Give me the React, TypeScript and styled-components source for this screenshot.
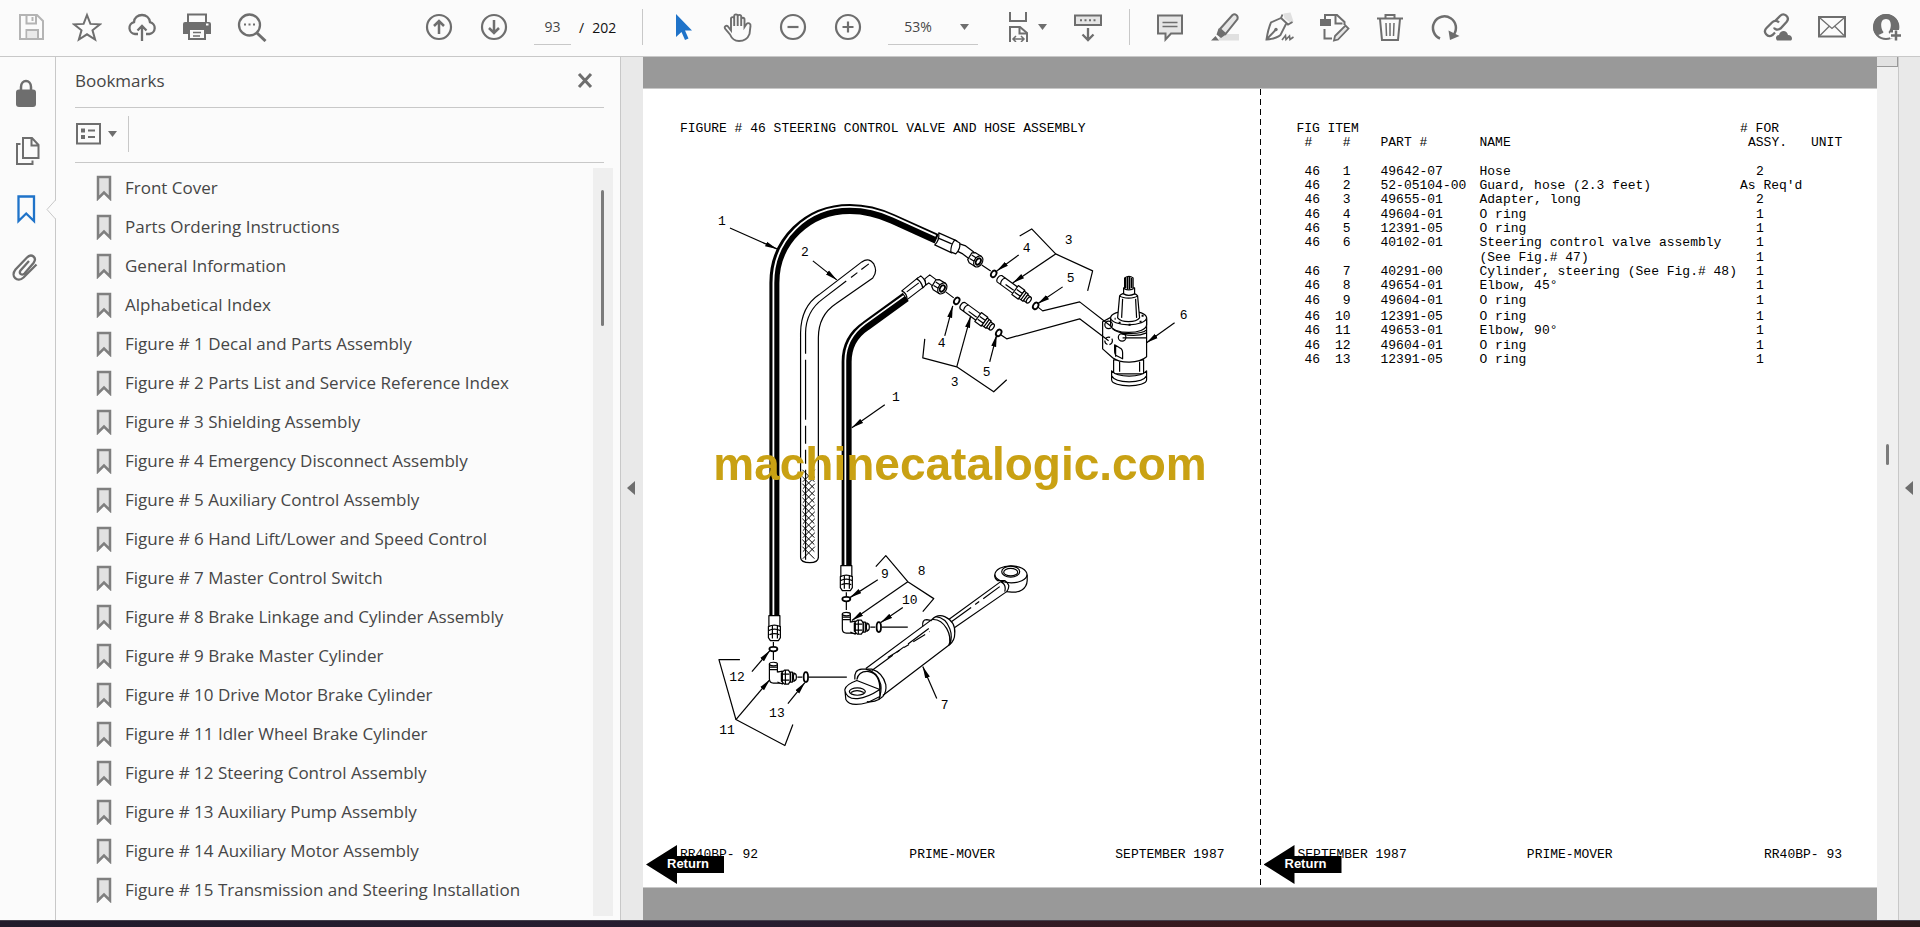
import React from "react";
import styled, { createGlobalStyle } from "styled-components";

const ui = `"Open Sans", "Noto Sans", sans-serif`;
const mono = `"Liberation Mono", "DejaVu Sans Mono", monospace`;
const ink = "#6e6e6e";
const rule = "#c8c8c8";

const GlobalStyle = createGlobalStyle`
  * { box-sizing: border-box; }
  body { margin: 0; background: #fbfbfb; font-family: ${ui}; color: #464646; }
  button, input, select { font: inherit; color: inherit; }
`;

/* ---------- shell ---------- */

const Shell = styled.div`
  display: flex;
  flex-direction: column;
  height: 100vh;
  overflow: hidden;
`;

const Toolbar = styled.header`
  flex: none;
  display: flex;
  align-items: center;
  height: 57px;
  padding: 0 6px 2px 4px;
  background: #fbfbfb;
  border-bottom: 1px solid ${rule};
`;

const ToolGroup = styled.div<{ $start?: number; $end?: boolean }>`
  display: flex;
  align-items: center;
  margin-left: ${(p) => (p.$end ? "auto" : `${p.$start ?? 0}px`)};
`;

const ToolButton = styled.button<{ $wide?: boolean }>`
  display: flex;
  align-items: center;
  justify-content: center;
  gap: 4px;
  width: ${(p) => (p.$wide ? 70 : 55)}px;
  height: 44px;
  padding: 0;
  border: 0;
  background: transparent;
`;

const Divider = styled.span<{ $before: number }>`
  width: 1px;
  height: 36px;
  margin: 0 12px 0 ${(p) => p.$before}px;
  background: ${rule};
`;

const PageInput = styled.input`
  width: 37px;
  height: 35px;
  margin-left: 13px;
  padding: 0;
  border: 0;
  border-bottom: 1px solid ${rule};
  background: transparent;
  font-size: 14px;
  text-align: center;
`;

const PageTotal = styled.span`
  display: flex;
  gap: 8px;
  margin-left: 8px;
  font-size: 14px;
  color: #111;
`;

const ZoomField = styled.label`
  position: relative;
  display: flex;
  margin: 0 12px 0 13px;
  svg {
    position: absolute;
    right: 9px;
    top: 14px;
    pointer-events: none;
  }
`;

const ZoomSelect = styled.select`
  appearance: none;
  width: 90px;
  height: 35px;
  padding: 0 16px;
  border: 0;
  border-bottom: 1px solid ${rule};
  border-radius: 0;
  background: transparent;
  font-size: 14px;
`;

const Workspace = styled.div`
  flex: 1;
  display: flex;
  min-height: 0;
`;

const Taskbar = styled.footer`
  flex: none;
  height: 7px;
  border-top: 1px solid #45404c;
  background: linear-gradient(90deg, #211b2b 0%, #281d30 40%, #3a191c 65%, #3a191c 85%, #2b1a1c 100%);
`;

/* ---------- navigation ---------- */

const Rail = styled.nav`
  position: relative;
  flex: none;
  display: flex;
  flex-direction: column;
  width: 56px;
  padding-top: 7px;
  border-right: 1px solid ${rule};
`;

const RailButton = styled.button`
  display: flex;
  align-items: center;
  width: 55px;
  height: 58px;
  padding: 0 0 0 11px;
  border: 0;
  background: transparent;
`;

const Notch = styled.svg`
  position: absolute;
  top: 143px;
  right: -1px;
`;

const Panel = styled.aside`
  flex: none;
  display: flex;
  flex-direction: column;
  width: 565px;
  padding: 0 7px 0 19px;
  border-right: 1px solid ${rule};
  background: #fbfbfb;
`;

const PanelHead = styled.div`
  display: flex;
  align-items: center;
  justify-content: space-between;
  height: 51px;
  margin-right: 9px;
  padding: 0 10px 3px 0;
  border-bottom: 1px solid ${rule};
`;

const PanelTitle = styled.h2`
  margin: 0;
  font-size: 17px;
  font-weight: 400;
`;

const PlainButton = styled.button`
  display: flex;
  align-items: center;
  gap: 6px;
  padding: 0;
  border: 0;
  background: transparent;
`;

const PanelTools = styled.div`
  display: flex;
  align-items: center;
  gap: 11px;
  height: 55px;
  margin-right: 9px;
  padding-bottom: 2px;
  border-bottom: 1px solid ${rule};
`;

const ToolsRule = styled.span`
  width: 1px;
  height: 36px;
  background: ${rule};
`;

const PanelBody = styled.div`
  flex: 1;
  display: flex;
  min-height: 0;
  padding: 5px 0 4px;
`;

const BookmarkList = styled.ul`
  flex: 1;
  margin: 0;
  padding: 0 0 0 21px;
  overflow: hidden;
  list-style: none;
`;

const BookmarkLink = styled.a`
  display: flex;
  align-items: center;
  gap: 13px;
  height: 39px;
  color: #464646;
  font-size: 17px;
  text-decoration: none;
  white-space: nowrap;
`;

const ListScroll = styled.div`
  flex: none;
  width: 20px;
  padding: 22px 0 0 8px;
  background: #efefef;
`;

const Thumb = styled.div<{ $size: number }>`
  width: 3px;
  height: ${(p) => p.$size}px;
  border-radius: 2px;
  background: #7b7b7b;
`;

const Collapser = styled.button<{ $edge?: boolean }>`
  flex: none;
  display: flex;
  align-items: center;
  justify-content: center;
  width: 22px;
  padding: 0 2px 2px 0;
  border: 0;
  border-left: ${(p) => (p.$edge ? `1px solid ${rule}` : "0")};
  background: #e9e9e9;
`;

/* ---------- document ---------- */

const Viewer = styled.main`
  flex: 1;
  display: flex;
  min-width: 0;
  padding: 31px 0 32px;
  background: #999;
`;

const Spread = styled.div`
  flex: 1;
  display: flex;
  border: solid ${rule};
  border-width: 1px 0;
  background: #fff;
`;

const Fold = styled.div`
  flex: none;
  width: 1px;
  background: repeating-linear-gradient(#000 0 6px, #fff 6px 10px);
`;

const Sheet = styled.article`
  position: relative;
  flex: 1 1 0;
  display: flex;
  flex-direction: column;
  min-width: 0;
  padding: 33px 0 25px;
  color: #000;
  font-family: ${mono};
  font-size: 13px;
  line-height: 14px;
`;

const FigureTitle = styled.h1`
  margin: 0;
  padding: 0 37px;
  font-size: 13px;
  font-weight: 400;
  white-space: nowrap;
`;

const Drawing = styled.svg`
  flex: 1;
  width: 100%;
  min-height: 0;
`;

const SheetFoot = styled.footer`
  display: grid;
  grid-template-columns: 1fr auto 1fr;
  margin-top: auto;
  padding: 0 35px 0 37px;
  white-space: nowrap;
  span:last-child { text-align: right; }
`;

const ReturnLink = styled.a`
  position: absolute;
  left: 3px;
  bottom: 3px;
  display: flex;
  align-items: center;
  width: 78px;
  height: 39px;
  padding: 0 0 2px 21px;
  background: #000;
  clip-path: polygon(0 50%, 31px 0, 31px 11px, 100% 11px, 100% 28px, 31px 28px, 31px 100%);
  color: #fff;
  font-family: "Liberation Sans", Arial, sans-serif;
  font-size: 13px;
  font-weight: 700;
  text-decoration: none;
`;

const Parts = styled.table`
  width: calc(100% - 71px);
  margin-left: 36px;
  border-collapse: collapse;
  table-layout: fixed;
  white-space: nowrap;
  th, td { height: 14px; padding: 0; font-weight: 400; text-align: left; vertical-align: top; }
  thead tr:last-child th { height: 29px; }
  tbody tr:nth-child(3n) td { height: 15px; }
  tbody tr:nth-child(10) td { height: 16px; }
`;

const Col = styled.col<{ $w?: number }>`
  width: ${(p) => (p.$w ? `${p.$w}px` : "auto")};
`;

const Fig = styled.td`
  && { padding-left: 8px; }
`;

const Item = styled.td`
  && { padding-right: 30px; text-align: right; }
`;

const Qty = styled.td<{ $long?: boolean }>`
  && { padding-left: ${(p) => (p.$long ? 0 : 16)}px; }
`;

const DocScroll = styled.div`
  flex: none;
  width: 21px;
  background: #f0f0f0;
`;

const ScrollStop = styled.div`
  width: 21px;
  height: 10px;
  margin-bottom: 377px;
  border: solid #999;
  border-width: 0 1px 1px 0;
  background: #e2e2e2;
`;

const ThumbSeat = styled.div`
  padding-left: 9px;
`;

const Watermark = styled.div`
  position: fixed;
  inset: 0;
  display: grid;
  place-items: center;
  color: #c9a113;
  font-family: "Liberation Sans", Arial, sans-serif;
  font-size: 46px;
  font-weight: 700;
  pointer-events: none;
`;

/* ---------- icons ---------- */

const Glyph = ({ children, color = ink, w = 2 }: { children: React.ReactNode; color?: string; w?: number }) => (
  <svg width="30" height="30" viewBox="0 0 30 30" fill="none" stroke={color} strokeWidth={w} aria-hidden="true">
    {children}
  </svg>
);

const Caret = () => (
  <svg width="9" height="6" viewBox="0 0 9 6" aria-hidden="true"><path d="M0 0h9L4.5 6z" fill={ink} /></svg>
);

const SideArrow = () => (
  <svg width="8" height="14" viewBox="0 0 8 14" aria-hidden="true"><path d="M8 0v14L0 7z" fill={ink} /></svg>
);

const icons = {
  save: <Glyph color="#b4b4b4"><path d="M3 3h17l6 6v18H3zM9.500 3v8.500h9.500V3M9.500 27v-9h11.500v9" /><path d="M10.500 19h9.500v7h-9.500z" fill="#eaeaea" stroke="none" /><path d="M15.500 5v4" /></Glyph>,
  star: <Glyph><path d="M15 3l3.400 8.900 9.600.4-7.500 6 2.600 9.200L15 22.300l-8.100 5.200 2.600-9.200-7.500-6 9.600-.4z" /></Glyph>,
  cloud: <Glyph w={2.300}><path d="M11 22H8a6 6 0 0 1-1-11.800C7 5.500 11 3 15 3s7.500 2.500 8 7.200A6 6 0 0 1 22.500 22H19M15 29V14M10.500 18.500L15 14l4.500 4.500" /></Glyph>,
  print: <Glyph><path d="M6 10V2.500h18V10" /><path d="M3 10h24q2 0 2 2v10h-5v-5H6v5H1V12q0-2 2-2z" fill={ink} stroke="none" /><path d="M7 17h16v10H7z" fill="#fbfbfb" /><path d="M11 20.500h8M11 24h7" strokeWidth="1.500" /><path d="M24 12.500h2.500" stroke="#fff" /></Glyph>,
  search: <Glyph><circle cx="12.500" cy="13" r="10.500" strokeWidth="2.300" /><path d="M20 21l8.500 8" strokeWidth="3" /><path d="M7 12.500h2M11.500 12.500h2M16 12.500h2" strokeWidth="2" /></Glyph>,
  up: <Glyph w={2.200}><circle cx="15" cy="15" r="12" /><path d="M15 22V9M10 14l5-5 5 5" strokeWidth="2.500" /></Glyph>,
  down: <Glyph w={2.200}><circle cx="15" cy="15" r="12" /><path d="M15 8v13M10 16l5 5 5-5" strokeWidth="2.500" /></Glyph>,
  pointer: <Glyph><path d="M8 2v23l5.500-5 3.500 8 3.500-1.500L17 18.500h7z" fill="#1f73c9" stroke="none" /></Glyph>,
  hand: <Glyph w={1.900}><path d="M8 18.500V6.800c0-2.300 3.200-2.300 3.200 0V14 4.200c0-2.400 3.500-2.400 3.500 0V14 4.600c0-2.300 3.500-2.300 3.500 0V14 7.500c0-2.300 3.300-2.300 3.300 0V15l2-3c1.500-1.800 4.500-.5 4 2L26.500 22c-1.500 4-4.500 7-10.500 7-5.500 0-7.500-3-9-6.500L2 16.500c-1-2.500 1.500-3.500 3-2z" /></Glyph>,
  minus: <Glyph w={2.200}><circle cx="15" cy="15" r="12" /><path d="M9.500 15h11" /></Glyph>,
  plus: <Glyph w={2.200}><circle cx="15" cy="15" r="12" /><path d="M9.500 15h11M15 9.500v11" /></Glyph>,
  fit: <Glyph><path d="M6 0v9h16V0M6 30V15h10l7 6v9" /><path d="M15.500 15v6.500H23" /><path d="M9 27h11M12 24l-3 3 3 3M17 24l3 3-3 3" strokeWidth="1.500" /></Glyph>,
  keys: <Glyph><rect x="2" y="3.500" width="26" height="9.500" fill="#e6e6e6" /><path d="M7 8.300h2M11.500 8.300h2M16 8.300h2M20.500 8.300h2" /><path d="M15 16v12M9.500 22.500l5.500 5.500 5.500-5.500" strokeWidth="2.300" /></Glyph>,
  comment: <Glyph><path d="M3 3.500h24v18H16l-5.500 6v-6H3z" fill="#e6e6e6" /><path d="M7.500 10.500h15M7.500 14.500h15" strokeWidth="1.300" /></Glyph>,
  marker: <Glyph><path d="M11 22h18v6.500H8z" fill="#e0e0e0" stroke="none" /><path d="M10 17L22.500 3c2.500-2 6 .5 5 4L15.500 22z" fill="#e6e6e6" /><path d="M8.500 16.500l7.500 6-5 3.500-4.500-3.500zM1 28.500l4.500-4.500 3.500 4.500z" fill={ink} stroke="none" /></Glyph>,
  sign: <Glyph w={1.900}><path d="M18.500 1.500l7-1 3 9-2 2-7-5z" fill="#e0e0e0" stroke="none" /><path d="M17.500 2.500l-1.500 3.500 7 6.500 4.500-2.500M16 6L6 10.500C3.500 16 2.500 21 1.500 27.500c6-.5 10.500-1.500 14-4.500L21 12M2 27l8.500-9" /><circle cx="11" cy="17.500" r="1.700" fill={ink} stroke="none" /><path d="M17 28l3.500-4.500.5 4 3.500-3.500.5 3.500 3.500-2.500" strokeWidth="1.600" /></Glyph>,
  stamp: <Glyph><path d="M0 7h11v7H0z" fill={ink} stroke="none" /><path d="M5 7V3h12l7.500 7v3M15.500 3v8.500h7M4.500 17v9.500H12" /><path d="M15 24L25.500 13.500l3 3L18 27.500l-4 1z" fill="#e6e6e6" strokeWidth="1.800" /></Glyph>,
  trash: <Glyph><path d="M2 6.500h26M10.500 6V3h9v3M5 7l2 21h16l2-21" /><path d="M11 11l.5 13M15 11v13M19 11l-.5 13" strokeWidth="1.500" /></Glyph>,
  rotate: <Glyph w={2.500}><path d="M10 26.500A11.500 11.500 0 1 1 23.500 23" /><path d="M18.500 18.500l11 5.500-9.500 4z" fill={ink} stroke="none" /></Glyph>,
  share: <Glyph w={2.300}><path d="M13 9l5-5c4-4 10.500 1 6.500 6l-6 6.500c-3 2-6 1-6.500-1M17 10.500c-2-2.500-5-2-7 0L4.500 16c-4 4 1 10.500 6 7l2.500-2.500" /><path d="M15 28.500c-2-2-1-5.500 2-5.500 1-5 8-5.500 9 0 4 0 5 4 3 5.500z" fill={ink} stroke="none" /></Glyph>,
  mail: <Glyph><rect x="2" y="5" width="26" height="19.500" /><path d="M3 6l12 10.500L27 6M3 23.500l9-9M27 23.500l-9-9" strokeWidth="1.300" /></Glyph>,
  person: <Glyph><circle cx="14" cy="15" r="12" /><path d="M14 2a13 13 0 0 0-9 22c2-2 6-2 6.500-4-3-3-4-13 2.500-13s5.500 10 2.500 13c.5 2 3 2 4.500 3l6-5A13 13 0 0 0 14 2z" fill={ink} stroke="none" /><path d="M18 23.500h12M24 18v12" stroke="#fbfbfb" strokeWidth="6" /><path d="M24 18.500v10M19 23.500h10" strokeWidth="2.500" /></Glyph>,
};

const LockIcon = () => <Glyph><path d="M10 12V9c0-8 10-8 10 0v3" strokeWidth="2.500" /><rect x="5" y="11.500" width="20" height="17.500" rx="3" fill={ink} stroke="none" /></Glyph>;
const PagesIcon = () => <Glyph><path d="M12 2h9l6.500 7v13H12zM20.500 2v7.500H27" /><path d="M9.500 8H6v20h15.500v-3.500" /></Glyph>;
const RailBookmark = () => <Glyph color="#1f73c9" w={2.300}><path d="M7.500 2.500h15.500V27l-7.800-7.500L7.500 27z" /></Glyph>;
const ClipIcon = () => <Glyph w={2.300}><path d="M18 9l-8.500 9.500c-2 3 1.500 5.500 4 3L22.500 11c4-5.500-2-10-6.500-5.500L4.500 17.500C-1 24.500 6.500 31 12.500 25.500L25.500 12.500" /></Glyph>;
const ItemBookmark = () => (
  <svg width="16" height="26" viewBox="0 0 16 26" aria-hidden="true">
    <path d="M2 2h12v21.500l-6-6-6 6z" fill="#e2e2e2" stroke="#7f7f7f" strokeWidth="2.500" />
  </svg>
);

/* ---------- exploded view ---------- */

type P = [number, number];

const callouts: [number, number, string][] = [
  [722, 221, "1"], [805, 252, "2"], [896, 397, "1"], [1069, 240, "3"], [1027, 248, "4"], [1071, 278, "5"],
  [942, 343, "4"], [987, 372, "5"], [955, 382, "3"], [1184, 315, "6"], [922, 571, "8"], [885, 574, "9"],
  [910, 600, "10"], [737, 677, "12"], [777, 713, "13"], [727, 730, "11"], [945, 705, "7"],
];

const leaders: [P, P][] = [
  [[730, 228], [777, 249]], [[813, 261], [837, 280]], [[885, 405], [852, 428]], [[1056, 254], [1013, 283]],
  [[1019, 255], [997, 271]], [[1063, 287], [1038, 304]], [[945, 336], [953, 306]], [[957, 367], [971, 316]],
  [[990, 362], [997, 335]], [[1175, 323], [1147, 343]], [[908, 582], [852, 621]], [[878, 580], [850, 598]],
  [[903, 608], [881, 623]], [[752, 672], [770, 651]], [[736, 720], [770, 680]], [[788, 704], [805, 683]],
  [[937, 699], [923, 667]],
];

const brackets = [
  "1020,236 1032,229 1056,254 1093,271 1088,291",
  "925,339 923,358 957,367 994,392 1007,380",
  "876,567 886,556 908,582 934,599 923,612",
  "740,660 719,660 736,720 785,746 793,725",
  "1038,307 1043,311 1080,302 1112,327",
  "1001,335 1007,339 1080,319 1109,341",
];

const Adapter = ({ x, y }: { x: number; y: number }) => (
  <g transform={`translate(${x} ${y}) rotate(36)`} fill="#fff">
    <path d="M0-4h20v8H0c-3-1-3-7 0-8z" /><path d="M4-4q-3 4 0 8M8 1h10" fill="none" />
    <path d="M19-5.500h8v11h-8zM20-1.500h7M20 2h7" /><path d="M27-4.500h5v9h-5zM29.500-4v8" /><path d="M32-3.500h4v7h-4z" /><ellipse cx="36" cy="0" rx="1.800" ry="3.500" />
  </g>
);

const HoseEnd = ({ x, y }: { x: number; y: number }) => (
  <g transform={`translate(${x} ${y})`} fill="#fff">
    <path d="M-5.500 0h11v11h-11z" /><path d="M-6 11q6-3 12 0v4q-6-3-12 0zM-6 15q6-3 12 0v7l-2 3h-8l-2-3z" /><path d="M-2 10v13M3 10v13M-5 19q5-2 10 0" fill="none" />
  </g>
);

const Elbow = ({ x, y }: { x: number; y: number }) => (
  <g transform={`translate(${x} ${y})`} fill="#fff">
    <path d="M-4 1V16q0 4 4 4h10V9H4V1z" /><ellipse cx="0" cy="1" rx="4" ry="1.800" /><path d="M-4 4h8M-4 6.500h8" />
    <path d="M4 9l5-1v13l-5-2M8 10l3-3h4l2 3v8l-2 3h-4l-3-3zM9 11h7M9 17h7M12 7v14" />
    <path d="M17 9h2v10h-2zM19 10h2v8h-2" /><ellipse cx="21.500" cy="14" rx="1.500" ry="3.500" />
    <path d="M0-21v4M0-11v8M24 14h5" fill="none" /><ellipse cx="0" cy="-14" rx="4" ry="2.200" strokeWidth="1.800" />
    <ellipse cx="32.500" cy="14" rx="2.200" ry="5" strokeWidth="1.800" />
  </g>
);

const Nut = ({ x, y }: { x: number; y: number }) => (
  <g transform={`translate(${x} ${y}) rotate(32)`} fill="#fff">
    <path d="M-7-4l3-2h7v12h-7l-3-2zM-6-2h6M-6 2h6" /><ellipse cx="3" cy="0" rx="4" ry="6" /><ellipse cx="3" cy="0" rx="2.200" ry="3.500" strokeWidth="1.800" />
  </g>
);

const ExplodedView = () => (
  <Drawing viewBox="643 136 617 680" preserveAspectRatio="xMinYMin meet" role="img" aria-label="Steering control valve and hose assembly">
    <defs>
      <marker id="tip" viewBox="0 0 12 6" refX="12" refY="3" markerWidth="12" markerHeight="6" markerUnits="userSpaceOnUse" orient="auto">
        <path d="M0 0.500l12 2.500-12 2.500z" stroke="none" fill="#000" />
      </marker>
    </defs>
    <g fill="none" stroke="#000" strokeWidth="1.200" strokeLinejoin="round">
      {/* long and short hoses */}
      <path d="M774.500 617V283C774.500 241 808 209 850 209 868 209 880 213 893 219L937 239" strokeWidth="10" />
      <path d="M773.500 617V283C773.500 240 807 207 850 207 868 207 881 211 894 217L936 236" strokeWidth="1.800" stroke="#fff" />
      <path d="M846.800 566V362C846.800 345 854 334 866 326L906 297" strokeWidth="10" />
      <path d="M845.500 566V361C845.500 345 853 333 865 324L904 296" strokeWidth="1.800" stroke="#fff" />
      <g fill="#fff">
        <path d="M960 244l6 2 8 6-3 8-8-6-6-3z" />
        <path d="M939 233l18 8-5 12-17-8q5-5 4-12z" /><path d="M955 240l5 3q1 6-4 11l-5-2q0-7 4-12z" /><path d="M938 238l14 6" />
        <path d="M925 279l5-4 8 6-4 6-5-4-3 2z" />
        <path d="M902 291l16-13 6 9-17 13q1-6-5-9z" /><path d="M917 279l4-3q5 4 5 9l-3 3q-1-6-6-9z" /><path d="M907 292l12-9" />
      </g>
      <Nut x={976} y={260} />
      <Nut x={940} y={287} />
      <path d="M982 265l9 6M946 292l8 6" />
      <g strokeWidth="1.800">
        <ellipse cx="994" cy="274" rx="2.500" ry="3.500" transform="rotate(30 994 274)" />
        <ellipse cx="1036" cy="306" rx="2.500" ry="3.500" transform="rotate(30 1036 306)" />
        <ellipse cx="957" cy="301" rx="2.500" ry="3.500" transform="rotate(30 957 301)" />
        <ellipse cx="999" cy="333" rx="2.500" ry="3.500" transform="rotate(30 999 333)" />
      </g>
      <Adapter x={1000} y={279} />
      <Adapter x={963} y={306} />
      <HoseEnd x={774.500} y={616} />
      <HoseEnd x={846.500} y={566} />
      <Elbow x={846.500} y={613.500} />
      <Elbow x={773.500} y={663.500} />
      <path d="M882 627.500h26M809 677.500h38" />

      {/* guard sleeve */}
      <path d="M800.700 558V333C801 316 807 303 819 295L862 262Q869 257 874 264 878 272 873 278L836 304C824 312 818.500 323 818.500 338V558Q818 563 810 563 801 563 800.700 558z" />
      <path d="M805.700 560V333C806 318 812 307 823 299L869 264" strokeDasharray="90 6 14 6 18 6 60 6 90 6 8 5 10 5 40 5 30" />
      {Array.from({ length: 12 }, (_, i) => 470 + i * 7).map((y) => (
        <path key={y} d={`M802.500 ${y}l12 12M815 ${y}l-12 12`} strokeWidth="1" />
      ))}

      {/* steering cylinder */}
      <path d="M866 669L932 620Q938 614 945 617 956 622 955 634 955 641 950 645L883 696" />
      <path d="M932 620Q941 619 947 629 952 638 949 646M936 617Q946 618 950 629 953 637 950 645" />
      <path d="M923 627q-1-7 4-7l5 1" />
      <path d="M872 671L929 629" strokeDasharray="26 5 9 5 30 5" />
      <path d="M888 658L930 632" strokeDasharray="14 5 6 5" />
      <path d="M949 620L1001 582M955 628L1007 592" />
      <path d="M952 622L1000 587" strokeDasharray="24 5 5 5" />
      <path d="M995 576C995 563 1027.500 563 1027.500 576V581C1027 590 1019 593 1012 592.500L1007 592Q1012 585 1005 581L998 581Q995 579 995 576z" fill="#fff" />
      <path d="M995 575C997 586 1026 586 1027.500 575M1001 582q6 3 4 10" />
      <ellipse cx="1011" cy="572" rx="9" ry="5.500" /><ellipse cx="1011" cy="572.500" rx="7" ry="3.800" />
      <path d="M855 680Q854 670 862 669.500L872 669.500Q883 673 886 685 887 692 883 697" />
      <path d="M866 669.500Q878 672 881 685 882 692 879 700M857 680Q859 671 869 672 880 674 880 690" />
      <path d="M845 690Q846 685 857 681L880 690V697L868 703Q850 708 846 700zM845 691Q847 700 858 699 868 698 880 690" fill="#fff" />
      <path d="M867 702Q874 703 879 700L883 697" />
      <ellipse cx="857.500" cy="692" rx="8" ry="3.700" /><path d="M851 693q6-4 13 0" />

      {/* control valve */}
      <g fill="#fff">
        <path d="M1114 360h30v14h-30zM1120 362v10M1140 362v10" />
        <path d="M1112 371v9c0 8 35 8 35 0v-9c-6 7-29 7-35 0zM1112 376c4 8 31 8 35 0" />
        <path d="M1112 317l-9 5v27l10 9c8 6 26 6 34-1v-38z" />
        <path d="M1111 318v7c0 10 36 10 36 0v-7z" /><ellipse cx="1129" cy="318" rx="18" ry="7" />
        <path d="M1120 296l-2 22c4 5 18 5 22 0l-2-22c-3-4-15-4-18 0zM1120 296c4 3 14 3 18 0M1123 299l-1 19M1136 299l1 19" />
        <path d="M1124 288v6q5 3 11 0v-6z" /><path d="M1125 278v11q4 2 8.500 0v-11q-4-3-8.500 0z" />
      </g>
      <path d="M1126 278v10M1128 277v12M1130 277v12M1132 278v10" strokeWidth="1.500" />
      <path d="M1113 329c6 6 29 6 34 1M1123 338h24M1122 334c8 2 18 2 25-1" />
      <circle cx="1109" cy="325" r="3.800" /><circle cx="1109" cy="341" r="3.800" strokeDasharray="5 2" />
      <circle cx="1122.500" cy="337.500" r="3.800" /><path d="M1115 345l5 3q3 1 3 5v6l-6-3q-2-1-2-5zM1116 346v11" />
      <path d="M1115 319h1M1129 325h2M1140 322h2M1142 316h2M1119 323h2" strokeWidth="2" />

      {brackets.map((b) => <polyline key={b} points={b} />)}
      {leaders.map(([a, b]) => (
        <line key={`${a}-${b}`} x1={a[0]} y1={a[1]} x2={b[0]} y2={b[1]} markerEnd="url(#tip)" />
      ))}
    </g>
    <g fontFamily={mono} fontSize="13" textAnchor="middle" fill="#000">
      {callouts.map(([x, y, t]) => <text key={`${x}-${y}`} x={x} y={y + 4}>{t}</text>)}
    </g>
  </Drawing>
);

/* ---------- data ---------- */

const bookmarks = [
  "Front Cover", "Parts Ordering Instructions", "General Information", "Alphabetical Index",
  "Figure # 1 Decal and Parts Assembly", "Figure # 2 Parts List and Service Reference Index",
  "Figure # 3 Shielding Assembly", "Figure # 4 Emergency Disconnect Assembly",
  "Figure # 5 Auxiliary Control Assembly", "Figure # 6 Hand Lift/Lower and Speed Control",
  "Figure # 7 Master Control Switch", "Figure # 8 Brake Linkage and Cylinder Assembly",
  "Figure # 9 Brake Master Cylinder", "Figure # 10 Drive Motor Brake Cylinder",
  "Figure # 11 Idler Wheel Brake Cylinder", "Figure # 12 Steering Control Assembly",
  "Figure # 13 Auxiliary Pump Assembly", "Figure # 14 Auxiliary Motor Assembly",
  "Figure # 15 Transmission and Steering Installation",
];

const parts: [string, string, string, string, string][] = [
  ["46", "1", "49642-07", "Hose", "2"],
  ["46", "2", "52-05104-00", "Guard, hose (2.3 feet)", "As Req'd"],
  ["46", "3", "49655-01", "Adapter, long", "2"],
  ["46", "4", "49604-01", "O ring", "1"],
  ["46", "5", "12391-05", "O ring", "1"],
  ["46", "6", "40102-01", "Steering control valve assembly", "1"],
  ["", "", "", "(See Fig.# 47)", "1"],
  ["46", "7", "40291-00", "Cylinder, steering (See Fig.# 48)", "1"],
  ["46", "8", "49654-01", "Elbow, 45°", "1"],
  ["46", "9", "49604-01", "O ring", "1"],
  ["46", "10", "12391-05", "O ring", "1"],
  ["46", "11", "49653-01", "Elbow, 90°", "1"],
  ["46", "12", "49604-01", "O ring", "1"],
  ["46", "13", "12391-05", "O ring", "1"],
];

const Tool = ({ name, icon }: { name: string; icon: keyof typeof icons }) => (
  <ToolButton type="button" aria-label={name}>{icons[icon]}</ToolButton>
);

export default function App() {
  return (
    <Shell>
      <GlobalStyle />
      <Toolbar>
        <ToolGroup>
          <Tool name="Save" icon="save" />
          <Tool name="Star" icon="star" />
          <Tool name="Upload" icon="cloud" />
          <Tool name="Print" icon="print" />
          <Tool name="Find" icon="search" />
        </ToolGroup>
        <ToolGroup $start={132}>
          <Tool name="Previous page" icon="up" />
          <Tool name="Next page" icon="down" />
          <PageInput aria-label="Page number" defaultValue="93" />
          <PageTotal><span>/</span><span>202</span></PageTotal>
          <Divider $before={26} />
          <Tool name="Select" icon="pointer" />
          <Tool name="Pan" icon="hand" />
          <Tool name="Zoom out" icon="minus" />
          <Tool name="Zoom in" icon="plus" />
          <ZoomField>
            <ZoomSelect aria-label="Zoom level" defaultValue="53%">
              <option>53%</option>
              <option>100%</option>
            </ZoomSelect>
            <Caret />
          </ZoomField>
          <ToolButton type="button" $wide aria-label="Fit width">{icons.fit}<Caret /></ToolButton>
          <Tool name="Page scrolling" icon="keys" />
          <Divider $before={14} />
          <Tool name="Comment" icon="comment" />
          <Tool name="Highlight" icon="marker" />
          <Tool name="Sign" icon="sign" />
          <Tool name="Edit" icon="stamp" />
          <Tool name="Delete" icon="trash" />
          <Tool name="Rotate" icon="rotate" />
        </ToolGroup>
        <ToolGroup $end>
          <Tool name="Share link" icon="share" />
          <Tool name="Email" icon="mail" />
          <Tool name="Add people" icon="person" />
        </ToolGroup>
      </Toolbar>

      <Workspace>
        <Rail>
          <RailButton type="button" aria-label="Security"><LockIcon /></RailButton>
          <RailButton type="button" aria-label="Page thumbnails"><PagesIcon /></RailButton>
          <RailButton type="button" aria-label="Bookmarks"><RailBookmark /></RailButton>
          <RailButton type="button" aria-label="Attachments"><ClipIcon /></RailButton>
          <Notch width="10" height="19" viewBox="0 0 10 19" aria-hidden="true">
            <path d="M10 0L1 9.500 10 19z" fill="#fbfbfb" />
            <path d="M9.500 0L1 9.500 9.500 19" fill="none" stroke={rule} />
          </Notch>
        </Rail>

        <Panel>
          <PanelHead>
            <PanelTitle>Bookmarks</PanelTitle>
            <PlainButton type="button" aria-label="Close">
              <svg width="18" height="18" viewBox="0 0 18 18"><path d="M3 2l12 13M15 2L3 15" stroke={ink} strokeWidth="3" /></svg>
            </PlainButton>
          </PanelHead>
          <PanelTools>
            <PlainButton type="button" aria-label="Options">
              <svg width="27" height="24" viewBox="0 0 27 24" fill="none" stroke={ink} strokeWidth="2">
                <rect x="2" y="2" width="23" height="19.500" />
                <path d="M6 8.500h4M6 15h4" strokeWidth="4" /><path d="M13 8.500h7M13 15h7" />
              </svg>
              <Caret />
            </PlainButton>
            <ToolsRule />
          </PanelTools>
          <PanelBody>
            <BookmarkList>
              {bookmarks.map((b) => (
                <li key={b}><BookmarkLink href="#"><ItemBookmark />{b}</BookmarkLink></li>
              ))}
            </BookmarkList>
            <ListScroll><Thumb $size={136} /></ListScroll>
          </PanelBody>
        </Panel>

        <Collapser type="button" aria-label="Collapse bookmarks"><SideArrow /></Collapser>

        <Viewer>
          <Spread>
            <Sheet>
              <FigureTitle>FIGURE # 46 STEERING CONTROL VALVE AND HOSE ASSEMBLY</FigureTitle>
              <ExplodedView />
              <SheetFoot><span>RR40BP- 92</span><span>PRIME-MOVER</span><span>SEPTEMBER 1987</span></SheetFoot>
              <ReturnLink href="#">Return</ReturnLink>
            </Sheet>
            <Fold />
            <Sheet>
              <Parts>
                <colgroup><Col $w={31} /><Col $w={53} /><Col $w={99} /><Col /><Col $w={71} /><Col $w={31} /></colgroup>
                <thead>
                  <tr><th>FIG</th><th>ITEM</th><th /><th /><th># FOR</th><th /></tr>
                  <tr><Fig as="th">#</Fig><Item as="th">#</Item><th>PART #</th><th>NAME</th><Fig as="th">ASSY.</Fig><th>UNIT</th></tr>
                </thead>
                <tbody>
                  {parts.map(([fig, item, part, name, qty], i) => (
                    <tr key={i}>
                      <Fig>{fig}</Fig><Item>{item}</Item><td>{part}</td><td>{name}</td>
                      <Qty $long={qty.length > 1}>{qty}</Qty><td />
                    </tr>
                  ))}
                </tbody>
              </Parts>
              <SheetFoot><span>SEPTEMBER 1987</span><span>PRIME-MOVER</span><span>RR40BP- 93</span></SheetFoot>
              <ReturnLink href="#">Return</ReturnLink>
            </Sheet>
          </Spread>
        </Viewer>

        <DocScroll>
          <ScrollStop />
          <ThumbSeat><Thumb $size={21} /></ThumbSeat>
        </DocScroll>
        <Collapser type="button" $edge aria-label="Open tools"><SideArrow /></Collapser>
      </Workspace>

      <Taskbar />
      <Watermark>machinecatalogic.com</Watermark>
    </Shell>
  );
}
